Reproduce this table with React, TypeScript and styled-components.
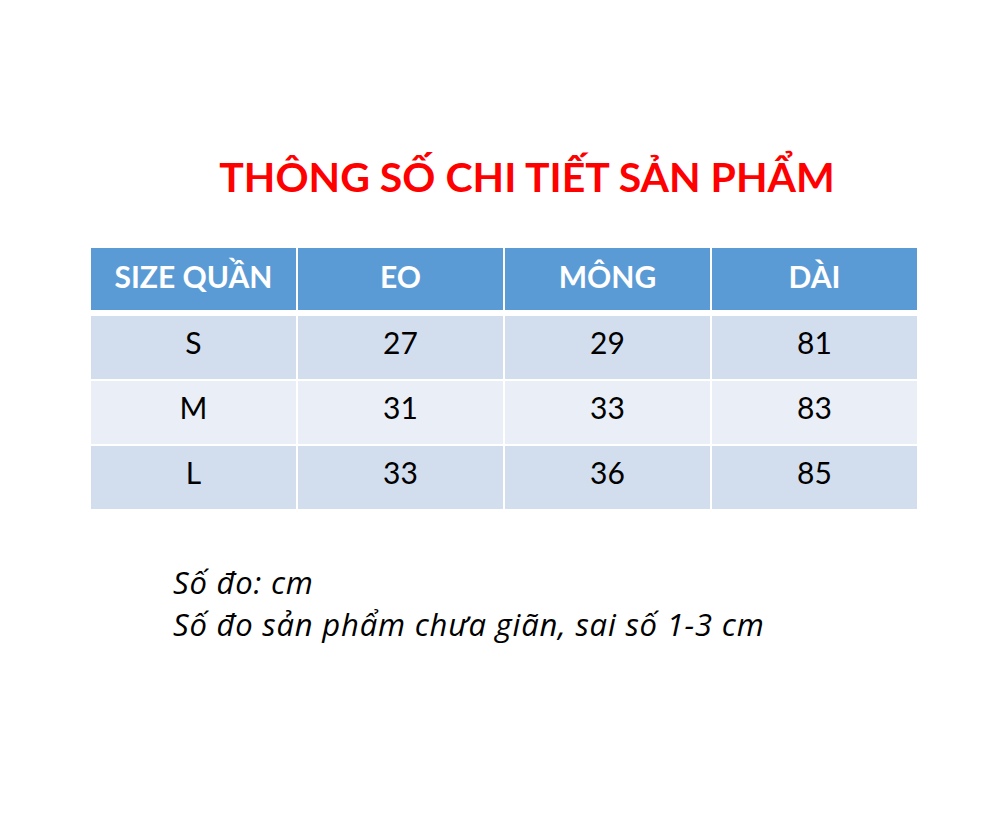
import React from "react";
import styled, { createGlobalStyle } from "styled-components";

const rows = [
  { size: "S", eo: 27, mong: 29, dai: 81 },
  { size: "M", eo: 31, mong: 33, dai: 83 },
  { size: "L", eo: 33, mong: 36, dai: 85 },
];

const GlobalStyle = createGlobalStyle`
  html, body {
    margin: 0;
    padding: 0;
    background: #ffffff;
  }
`;

const Page = styled.div`
  width: 994px;
  height: 826px;
  box-sizing: border-box;
  padding: 152px 0 0 91px;
  font-family: Lato, "Open Sans", sans-serif;
`;

const Title = styled.h1`
  margin: 0 0 46px;
  width: 826px;
  padding-left: 46px;
  box-sizing: border-box;
  text-align: center;
  font-size: 41px;
  line-height: 50px;
  font-weight: 700;
  color: #ff0000;
`;

const Table = styled.div`
  display: grid;
  grid-template-columns: repeat(4, 205px);
  column-gap: 2px;
  row-gap: 2px;
  width: 826px;
`;

const HeadCell = styled.div`
  height: 62px;
  margin-bottom: 4px;
  box-sizing: border-box;
  padding-bottom: 6px;
  display: flex;
  align-items: center;
  justify-content: center;
  background: #5b9bd5;
  color: #ffffff;
  font-size: 30px;
  font-weight: 700;
`;

const Cell = styled.div<{ $alt: boolean }>`
  height: 63px;
  box-sizing: border-box;
  padding-bottom: 11px;
  display: flex;
  align-items: center;
  justify-content: center;
  background: ${(p) => (p.$alt ? "#e9eef7" : "#d2ddee")};
  color: #000000;
  font-size: 30px;
`;

const Notes = styled.div`
  margin: 52px 0 0 82px;
  font-family: "Open Sans", sans-serif;
  font-size: 31px;
  font-style: italic;
  letter-spacing: 0.8px;
  line-height: 42px;
  color: #000000;
  white-space: nowrap;
`;

export default function App() {
  return (
    <Page>
      <GlobalStyle />
      <Title>THÔNG SỐ CHI TIẾT SẢN PHẨM</Title>
      <Table>
        <HeadCell>SIZE QUẦN</HeadCell>
        <HeadCell>EO</HeadCell>
        <HeadCell>MÔNG</HeadCell>
        <HeadCell>DÀI</HeadCell>
        {rows.map((r, i) => (
          <React.Fragment key={r.size}>
            <Cell $alt={i % 2 === 1}>{r.size}</Cell>
            <Cell $alt={i % 2 === 1}>{r.eo}</Cell>
            <Cell $alt={i % 2 === 1}>{r.mong}</Cell>
            <Cell $alt={i % 2 === 1}>{r.dai}</Cell>
          </React.Fragment>
        ))}
      </Table>
      <Notes>
        <div>Số đo: cm</div>
        <div>Số đo sản phẩm chưa giãn, sai số 1-3 cm</div>
      </Notes>
    </Page>
  );
}
